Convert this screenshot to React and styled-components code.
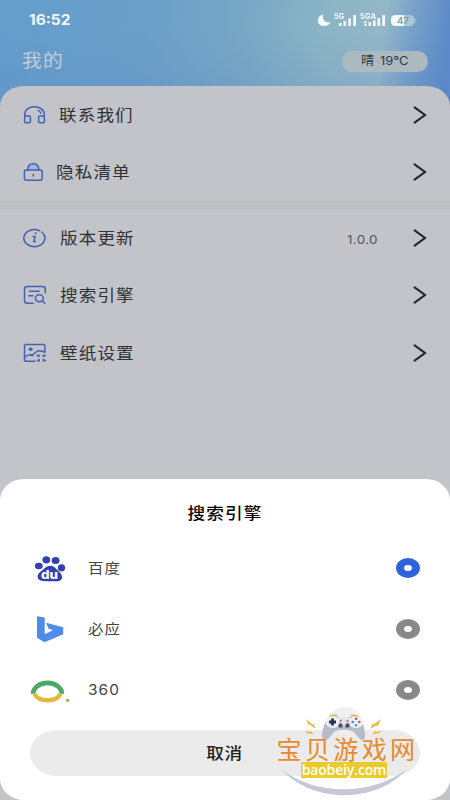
import React from 'react';
import styled, {createGlobalStyle} from 'styled-components';

const GlobalStyle = createGlobalStyle`
  * {
    box-sizing: border-box;
  }
  body {
    margin: 0;
    font-family: Inter, 'Noto Sans CJK SC', sans-serif;
  }
`;

const Screen = styled.div`
  position: relative;
  display: flex;
  flex-direction: column;
  width: 450px;
  height: 800px;
  overflow: hidden;
  background:
    linear-gradient(180deg, rgba(90, 130, 190, 0) 30px, rgba(90, 130, 190, 0.22) 100px),
    linear-gradient(97deg, #649dcb 0, #6b9fc8 150px, #79a8c6 250px, #8cb5c5 330px, #93b7c8 385px, #769fc9 415px, #5c8ac8 450px);
  background-size: 100% 120px;
  background-repeat: no-repeat;
`;

const Text = styled.span`
  display: inline-block;
  white-space: nowrap;
  line-height: 1;
  font-size: ${({size}) => size || 16}px;
  font-weight: ${({weight}) => weight || 400};
  letter-spacing: ${({spacing}) => spacing || 0}px;
  color: ${({color}) => color || '#303135'};
  transform: scaleX(${({stretch}) => stretch || 1.1});
  transform-origin: ${({origin}) => origin || 'left'} center;
`;

const StatusBar = styled.div`
  display: flex;
  align-items: center;
  justify-content: space-between;
  height: 40px;
  padding: 0 31px 0 29px;
`;

const StatusIcons = styled.svg`
  width: 102px;
  height: 20px;
  font-family: Inter, sans-serif;
  font-weight: 700;
`;

const Header = styled.div`
  display: flex;
  align-items: center;
  justify-content: space-between;
  height: 46px;
  padding: 0 22px 4px;
`;

const Weather = styled.div`
  display: flex;
  align-items: center;
  gap: 7px;
  width: 86px;
  height: 21px;
  padding-left: 19px;
  border-radius: 11px;
  background: #adb9c0;
`;

const Menu = styled.div`
  flex: 1;
  border-radius: 24px 24px 0 0 / 20px 20px 0 0;
  background: #c3c4c9;
`;

const MenuRow = styled.div`
  display: flex;
  align-items: center;
  height: 57.5px;
  padding: 0 23px;
`;

const MenuIcon = styled.svg`
  flex: none;
  width: 24px;
  height: 20px;
  margin-right: ${({$gap}) => $gap}px;
  fill: none;
  stroke: #4460b5;
  stroke-width: 1.5;
  stroke-linecap: round;
  stroke-linejoin: round;
`;

const Spacer = styled.div`
  flex: 1;
`;

const Version = styled.div`
  width: 66px;
`;

const Chevron = styled.svg`
  width: 14px;
  height: 20px;
  fill: none;
  stroke: #252629;
  stroke-width: 2.1;
  stroke-linecap: round;
`;

const Divider = styled.div`
  height: 8px;
  background: #bebfc3;
`;

const Sheet = styled.div`
  flex: none;
  height: 321px;
  padding: 0 30px;
  border-radius: 24px / 21px;
  background: #fff;
`;

const SheetWrap = styled.div`
  display: flex;
  flex-direction: column;
  flex: none;
  background: #c3c4c9;
`;

const SheetTitle = styled.div`
  display: flex;
  align-items: center;
  justify-content: center;
  height: 58.5px;
  padding-top: 10px;
`;

const Option = styled.div`
  display: flex;
  align-items: center;
  height: 61px;
`;

const Logo = styled.svg`
  flex: none;
  width: 42px;
  height: 30px;
  margin-right: 16px;
`;

const Radio = styled.div`
  width: 24px;
  height: 20px;
  border-style: solid;
  border-width: 7px 8px;
  border-color: ${({$checked}) => ($checked ? '#2c62dc' : '#898989')};
  border-radius: 50%;
  background: #fff;
`;

const Cancel = styled.div`
  display: flex;
  align-items: center;
  justify-content: center;
  height: 46px;
  margin-top: 9.5px;
  border-radius: 27px / 23px;
  background: #ebebeb;
`;

const Watermark = styled.div`
  position: absolute;
  left: 274px;
  top: 706px;
  width: 144px;
  height: 92px;
`;

const WatermarkArt = styled.svg`
  position: absolute;
  left: 0;
  top: 0;
`;

const WatermarkText = styled.div`
  position: relative;
  display: flex;
  flex-direction: column;
  align-items: center;
  padding-top: 29px;
`;

const SiteName = styled.div`
  width: 142px;
  margin-left: 3px;
  height: 27px;
  font-family: 'Noto Sans CJK SC', sans-serif;
  font-size: 25px;
  line-height: 27px;
  letter-spacing: 3.4px;
  white-space: nowrap;
  color: #e8892b;
`;

const SiteUrl = styled.div`
  width: 86px;
  height: 16px;
  margin-left: -4px;
  background: #ebca2c;
  color: #fff;
  font: 600 14px/15px 'Open Sans', sans-serif;
  letter-spacing: -0.15px;
  text-align: center;
`;

const menuIcons = {
  contact: (
    <>
      <path d="M1.8 11V9.5C1.8 4.7 6 1.8 11.5 1.8S21.2 4.7 21.2 9.5V11" />
      <rect x="1.6" y="11" width="5.8" height="6.8" rx="1.3" />
      <rect x="15.6" y="11" width="5.8" height="6.8" rx="1.3" />
      <path d="M15.2 5.4c1.4.6 2.2 1.5 2.5 2.8" />
    </>
  ),
  privacy: (
    <>
      <path d="M4.7 8C4.7 4 6.8 1.7 10.2 1.7S15.8 4 15.8 8" fill="#a9b4dc" />
      <rect x="1.4" y="8" width="17.8" height="10.3" rx="2" />
      <path d="M10.3 12.6v1.4" stroke="#4a577f" />
    </>
  ),
  version: (
    <>
      <path d="M16.5 2.7A10.5 8.5 0 1 0 20.4 5.8M18.7 4.1l.5.4" />
      <path d="M10 8.4h2.2l-1.6 5.2h2" />
      <path d="M12.6 5.3h.1" strokeWidth="2" />
    </>
  ),
  search: (
    <>
      <path d="M10 18.2H4.5c-2 0-3-.8-3-2.5V4c0-1.6 1-2.4 3-2.4h14.8c2 0 3 .8 3 2.4v4" />
      <path d="M6.5 6.2h9.7M5.8 10.7h4" />
      <ellipse cx="16.4" cy="13.2" rx="4" ry="3.5" />
      <path d="M19.2 15.8l2.6 2.4" />
    </>
  ),
  wallpaper: (
    <>
      <path d="M12 18.2H3.2c-1 0-1.7-.5-1.7-1.4V3c0-.9.6-1.4 1.7-1.4h17.2c1 0 1.5.5 1.5 1.4v6.3" />
      <ellipse cx="7.6" cy="6.2" rx="2" ry="1.7" fill="#4460b5" stroke="none" />
      <path d="M2 14c3-3 5.5-2.7 8-1.5M8 12.4c3-.3 4.4-3.8 7-4.5 2.3-.5 4 .3 6.5 1.2" />
      <path d="M14 12.3l2 1.3v-2M22.7 12.3l-2.3 1.3v-2M14.3 17.7l1.9-1.3v2M22.7 17.7l-2.3-1.3v2" strokeWidth="1.3" />
    </>
  ),
};

const logos = {
  baidu: (
    <g fill="#3340b4">
      <ellipse cx="8.8" cy="13" rx="3.9" ry="3.3" />
      <ellipse cx="16.3" cy="6.8" rx="3.9" ry="3.6" />
      <ellipse cx="25.6" cy="7.5" rx="3.9" ry="3.6" />
      <ellipse cx="31.5" cy="14.8" rx="3.7" ry="3.6" />
      <path d="M20.3 12.8c3.6 0 5.6 3 8.4 5.4 5.5 4.7 3.8 9.8-1.2 10-4.6.1-9.2.1-14-.1-7.2-.3-7.7-6.3-2.2-10 3-2.1 5.1-5.3 9-5.3z" />
      <text x="11" y="26.2" fill="#fff" fontFamily="Inter, sans-serif" fontSize="12" fontWeight="800" textLength="17" lengthAdjust="spacingAndGlyphs">du</text>
    </g>
  ),
  bing: (
    <path fill="#4f8ce9" d="M7 2.2l7.7 1.3v16.8l8-4.1-4.2-1.8-2.5-5.7 17.2 4.6v7L14.5 28.2 7 23.8z" />
  ),
  so: (
    <g fill="none" strokeWidth="4.6">
      <path d="M3.1 18.8A13.2 10 0 1 1 31.9 18.8" stroke="#4ea861" />
      <path d="M4.3 18.8C8.7 27.5 26.3 27.5 30.7 18.8" stroke="#e5b83d" strokeWidth="4.2" />
      <rect x="35.8" y="24" width="3.6" height="2.8" rx="1" fill="#c3a152" stroke="none" />
    </g>
  ),
};

const Item = ({icon, label, gap = 13, note}) => (
  <MenuRow>
    <MenuIcon viewBox="0 0 24 20" $gap={gap}>{menuIcons[icon]}</MenuIcon>
    <Text spacing={1}>{label}</Text>
    <Spacer />
    {note && (
      <Version>
        <Text size={12} spacing={0.3} stretch={1.12} color="#55565b">{note}</Text>
      </Version>
    )}
    <Chevron viewBox="0 0 14 20">
      <path d="M1.6 2.4L12 10 1.6 17.6" />
    </Chevron>
  </MenuRow>
);

const Engine = ({logo, name, checked}) => (
  <Option>
    <Logo viewBox="0 0 42 30">{logos[logo]}</Logo>
    <Text size={14} spacing={1} color="#444">{name}</Text>
    <Spacer />
    <Radio $checked={checked} />
  </Option>
);

const Status = () => (
  <StatusBar>
    <Text size={14} weight={700} color="#f4fbff">16:52</Text>
    <StatusIcons viewBox="0 0 102 20" fill="#f4fbff">
      <path d="M6.2 4.5C2.8 5 .9 7.400.9 10.400c0 3.500 2.600 5.700 6.300 5.700 3.100 0 5.500-1.600 6.300-4.100-4.800 1.400-8.900-2.500-7.300-7.500z" />
      <text x="17" y="9" fontSize="7" textLength="10">5G</text>
      <path d="M22 13h2.600v3H22zM26.500 11h2.600v5h-2.600zM31.300 8.500h2.600V16h-2.600zM36.300 5H39v11h-2.700z" />
      <text x="43" y="9" fontSize="7" textLength="16">5GA</text>
      <path d="M47 11.500h2.600v1.700H47zM47 14.300h2.600V16H47zM51.500 12h2.600v4h-2.600zM56 10.500h2.600V16H56zM60.500 8h2.600v8h-2.600zM65.300 5H68v11h-2.700z" />
      <rect x="74" y="5" width="23.500" height="11" rx="4.500" fill="#a9c7d6" />
      <path d="M78.500 5H87v11h-8.500a4.500 4.500 0 0 1-4.500-4.500v-2A4.500 4.500 0 0 1 78.500 5z" />
      <path d="M98.300 8.500c1.300.5 1.300 3.500 0 4z" fill="#b5d0dc" />
      <text x="80" y="14" fontSize="9.500" fontWeight="600" fill="#8299a6" textLength="12">47</text>
    </StatusIcons>
  </StatusBar>
);

const SiteMark = () => (
  <Watermark>
    <WatermarkArt width="144" height="92" viewBox="0 0 144 92">
      <ellipse cx="71" cy="15" rx="17" ry="14" fill="#ebedef" opacity="0.8" />
      <path d="M53 13c3-4 10-4 13-1h8c4-3 12-3 14 2 2 6 3 12 3 16 0 5-4 5-6 2l-5-6c-3-3-17-3-20 0l-5 6c-3 4-7 3-7-2 0-4 2-12 5-17z" fill="#b6bbc7" />
      <ellipse cx="59" cy="16" rx="7.500" ry="6" fill="#edf0f6" />
      <ellipse cx="82" cy="16" rx="7.500" ry="6" fill="#edf0f6" />
      <path d="M65 12h11v8H65z" fill="#e0e3ea" />
      <path d="M55 16h7M58.500 12.500v7" stroke="#29354a" strokeWidth="2.800" />
      <g fill="#dc4e5a">
        <circle cx="82" cy="12.800" r="1.300" />
        <circle cx="82" cy="19.200" r="1.300" fill="#3aa2bd" />
        <circle cx="78.700" cy="16" r="1.300" fill="#4387c5" />
        <circle cx="85.300" cy="16" r="1.300" />
        <circle cx="66.500" cy="15" r="1" />
        <circle cx="73.500" cy="15" r="1" />
      </g>
      <circle cx="66.500" cy="19.500" r="2.200" fill="#46546b" />
      <circle cx="73.500" cy="19.500" r="2.200" fill="#46546b" />
      <path d="M56 10.400c2-1.600 4-1.600 7-1.200M77 9.300c3-.4 5-.2 7 1.200" stroke="#e7b73b" strokeWidth="1.500" fill="none" />
      <path d="M32 13l7 6 .3-2 2.200 6-6.300-5-.2 2zM107 13l-8 6-.2-2-2.300 6 6.300-4 .3 2zM31 25l5 1 1-1 2.500 3.500-5-1.500-.5 1zM107 25l-5 1-1-1-2.500 3.500 5-1.500.5 1z" fill="#edb62f" />
      <path d="M7 63c34 27 91 27 126 0-31 35-94 35-126 0z" fill="#c6c9d5" />
    </WatermarkArt>
    <WatermarkText>
      <SiteName>宝贝游戏网</SiteName>
      <SiteUrl>baobeiy.com</SiteUrl>
    </WatermarkText>
  </Watermark>
);

const App = () => (
  <Screen>
    <GlobalStyle />
    <Status />
    <Header>
      <Text size={18} spacing={1} color="#c0cddc">我的</Text>
      <Weather>
        <Text size={12} color="#2f3940">晴</Text>
        <Text size={12} stretch={1.08} color="#2f3940">19°C</Text>
      </Weather>
    </Header>
    <Menu>
      <Item icon="contact" label="联系我们" gap={12} />
      <Item icon="privacy" label="隐私清单" gap={9} />
      <Divider />
      <Item icon="version" label="版本更新" note="1.0.0" />
      <Item icon="search" label="搜索引擎" />
      <Item icon="wallpaper" label="壁纸设置" />
    </Menu>
    <SheetWrap>
      <Sheet>
        <SheetTitle>
          <Text weight={500} spacing={1} origin="center" color="#080808">搜索引擎</Text>
        </SheetTitle>
        <Engine logo="baidu" name="百度" checked />
        <Engine logo="bing" name="必应" />
        <Engine logo="so" name="360" />
        <Cancel>
          <Text spacing={0.5} weight={500} origin="center" color="#222">取消</Text>
        </Cancel>
      </Sheet>
    </SheetWrap>
    <SiteMark />
  </Screen>
);

export default App;
